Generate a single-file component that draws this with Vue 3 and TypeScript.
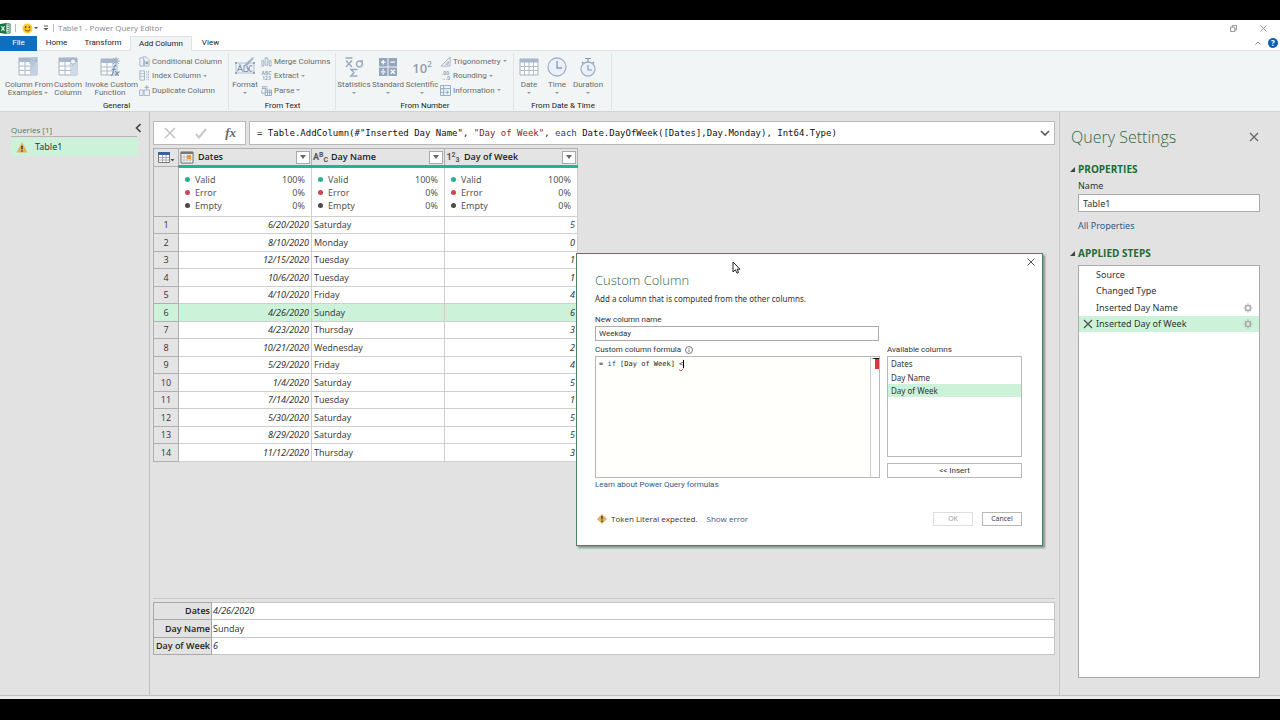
<script setup lang="ts">
import { ref } from 'vue'

interface Row { date: string; day: string; num: number }

const rows: Row[] = [
  { date: '6/20/2020', day: 'Saturday', num: 5 },
  { date: '8/10/2020', day: 'Monday', num: 0 },
  { date: '12/15/2020', day: 'Tuesday', num: 1 },
  { date: '10/6/2020', day: 'Tuesday', num: 1 },
  { date: '4/10/2020', day: 'Friday', num: 4 },
  { date: '4/26/2020', day: 'Sunday', num: 6 },
  { date: '4/23/2020', day: 'Thursday', num: 3 },
  { date: '10/21/2020', day: 'Wednesday', num: 2 },
  { date: '5/29/2020', day: 'Friday', num: 4 },
  { date: '1/4/2020', day: 'Saturday', num: 5 },
  { date: '7/14/2020', day: 'Tuesday', num: 1 },
  { date: '5/30/2020', day: 'Saturday', num: 5 },
  { date: '8/29/2020', day: 'Saturday', num: 5 },
  { date: '11/12/2020', day: 'Thursday', num: 3 },
]
const columns = [
  { name: 'Dates', kind: 'date' },
  { name: 'Day Name', kind: 'text' },
  { name: 'Day of Week', kind: 'number' },
]
const quality = [
  { label: 'Valid', value: '100%', tone: 'valid' },
  { label: 'Error', value: '0%', tone: 'error' },
  { label: 'Empty', value: '0%', tone: 'empty' },
]
const steps = [
  { name: 'Source', gear: false },
  { name: 'Changed Type', gear: false },
  { name: 'Inserted Day Name', gear: true },
  { name: 'Inserted Day of Week', gear: true },
]
const tabs = ['Home', 'Transform', 'Add Column', 'View']

const activeTab = ref('Add Column')
const selectedRow = ref(5)
const selectedStep = ref(3)
const selectedColumn = ref('Day of Week')
const queryName = ref('Table1')
const newColumn = ref('Weekday')
</script>

<template>
  <div class="screen">
    <header class="titlebar">
      <svg class="excel" viewBox="0 0 12 12"><path d="M6 1h5v10H6z" fill="#fff" stroke="#217346" /><path d="M8 3h2M8 5h2M8 7h2M8 9h2" stroke="#217346" /><path d="M0 1l7-1v12l-7-1z" fill="#1e7145" /><path d="M1.500 3.500l3.500 5M5 3.500l-3.500 5" stroke="#fff" stroke-width="1.200" /></svg>
      <span class="bar"></span>
      <svg class="smile" viewBox="0 0 12 12"><circle cx="6" cy="6" r="5.500" fill="#fcc92b" /><circle cx="4" cy="4.500" r=".9" fill="#553c00" /><circle cx="8" cy="4.500" r=".9" fill="#553c00" /><path d="M3 7q3 3.500 6 0" fill="none" stroke="#553c00" /></svg>
      <i class="caret dark"></i>
      <svg class="qat" viewBox="0 0 6 6"><path d="M1 1h4" stroke="#555" /><path d="M0.500 3h5L3 5.500z" fill="#555" /></svg>
      <span class="bar"></span>
      <span class="title">Table1 - Power Query Editor</span>
      <span class="fill"></span>
      <button class="win" aria-label="Restore"><svg viewBox="0 0 8 8"><path d="M.5 2.500h5v5h-5zM2.500 2.500v-2h5v5h-2" fill="none" stroke="#888" /></svg></button>
      <button class="win" aria-label="Close"><svg viewBox="0 0 8 8"><path d="M.5.5l7 7M7.500.5l-7 7" stroke="#888" /></svg></button>
    </header>
    <nav class="tabs">
      <button class="file">File</button>
      <button v-for="t in tabs" :key="t" :class="['tab', t.toLowerCase().replace(' ', '-'), { active: t === activeTab }]" @click="activeTab = t">{{ t }}</button>
      <span class="fill"></span>
      <svg class="collapse" viewBox="0 0 6 4"><path d="M.5 3.500L3 1l2.500 2.500" fill="none" stroke="#888" /></svg>
      <button class="help" aria-label="Help">?</button>
    </nav>

    <section class="ribbon">
      <div class="group general">
        <div class="tools">
          <button class="big w46"><svg viewBox="0 0 20 20"><path d="M1 1h18v17H1z" fill="#f8fafc" stroke="#a9b1bc" /><path d="M1 1h18v4H1z" fill="#a7b7cc" /><path d="M1 9h18M1 13.500h18M7 5v13M13 5v13" stroke="#b3bcc7" /><path d="M13 5h6v13h-6z" fill="#c2d0e2" /><path d="M14 0h6l-4 5h3l-8 9 3-7h-3z" fill="#b6c5d8" /></svg>Column From<br><span>Examples <i class="caret"></i></span></button>
          <button class="big w34"><svg viewBox="0 0 20 20"><path d="M1 1h18v17H1z" fill="#f8fafc" stroke="#a9b1bc" /><path d="M1 1h18v4H1z" fill="#a7b7cc" /><path d="M1 9h18M1 13.500h18M7 5v13M13 5v13" stroke="#b3bcc7" /><path d="M13 5h6v13h-6z" fill="#cfdbe9" /><path d="M15 0v9M10.500 4.500h9M12 1.500l6 6M18 1.500l-6 6" stroke="#9fb0c5" /><circle cx="15" cy="4.500" r="2" fill="#eef2f7" /></svg>Custom<br>Column</button>
          <button class="big w50"><svg viewBox="0 0 20 20"><path d="M1 2h16v16H1z" fill="#f8fafc" stroke="#a9b1bc" /><path d="M1 2h16v4H1z" fill="#a7b7cc" /><path d="M1 10h16M1 14h16M7 6v12" stroke="#b3bcc7" /><path d="M12 6h6v12h-6z" fill="#cfdbe9" /><path d="M16 0v8M12 4h8M13 1l6 6M19 1l-6 6" stroke="#9fb0c5" /><path d="M16.500 9q-2-1-2.500 1.500l-1.200 6q-.5 2-2 2M11.500 12.500h4.500M15 14.500q1.500 0 2 2t2 2M19.500 14.500l-4.500 4" fill="none" stroke="#7f92ab" stroke-width="1.200" /></svg>Invoke Custom<br>Function</button>
          <div class="smalls">
            <button class="small"><svg viewBox="0 0 12 12"><path d="M1 2h4v9H1zM4 1h4l3 3v7H6V4" fill="#edf2f8" stroke="#a3b2c6" /><path d="M7 6h3v3H7z" fill="#91a5bf" /></svg>Conditional Column</button>
            <button class="small"><svg viewBox="0 0 12 12"><path d="M1 1h5v10H1z" fill="#edf2f8" stroke="#a3b2c6" /><path d="M1 4h5M1 7h5M8.500 1v10M10.500 1v10" stroke="#a3b2c6" stroke-dasharray="2 1" /></svg>Index Column <i class="caret"></i></button>
            <button class="small"><svg viewBox="0 0 12 12"><path d="M.5 5.500h4v6h-4zM5.500 5.500h6v6h-6z" fill="#edf2f8" stroke="#a3b2c6" /><path d="M8.500 0v5M6 2.500h5" stroke="#91a5bf" /></svg>Duplicate Column</button>
          </div>
        </div>
        <div class="caption">General</div>
      </div>
      <div class="group text">
        <div class="tools">
          <button class="big w30"><svg viewBox="0 0 20 20"><path d="M1 6h18v10H1z" fill="#eef3f9" stroke="#b4c0d0" /><path d="M0 5h2v2H0zM18 5h2v2h-2zM0 15h2v2H0zM18 15h2v2h-2z" fill="#94a6be" /><path d="M2.500 14.500L5 8l2.500 6.500M3.500 12.500h3M9 14.500V8.500h1.500q2 0 1.500 2.500q2 .5.5 3.500zM17.500 9q-3.500-1.500-3.500 2.500t3.500 2.500" fill="none" stroke="#8699b3" stroke-width="1.200" /><path d="M9 9l2-3 7-6 1 1-6 7z" fill="#a5b2c4" /></svg>Format<br><i class="caret"></i></button>
          <div class="smalls">
            <button class="small"><svg viewBox="0 0 12 12"><path d="M1 5h2v6H1zM9 5h2v6H9z" fill="#edf2f8" stroke="#a3b2c6" /><path d="M4.500 10V2h3v8z" fill="#dfe8f3" stroke="#a3b2c6" /></svg>Merge Columns</button>
            <button class="small"><span class="glyph">ABC<br>123</span>Extract <i class="caret"></i></button>
            <button class="small"><svg viewBox="0 0 12 12"><path d="M1 2h6M1 4h6" stroke="#91a5bf" stroke-width="1.500" stroke-dasharray="2 .5" /><path d="M4.500 5.500h7v6h-7zM4.500 8h7M7 5.500v6M9.500 5.500v6M1 6v3h3" fill="none" stroke="#91a5bf" /></svg>Parse <i class="caret"></i></button>
          </div>
        </div>
        <div class="caption">From Text</div>
      </div>
      <div class="group number">
        <div class="tools">
          <button class="big w34"><svg viewBox="0 0 20 20"><path d="M1.500 1h7M2 3.500l6 6.500M8 3.500L2 10M19 4h-4M15 4a3 3 0 1 0 1 0M13.500 12.500H7l3 3-3 3.500h6.500" fill="none" stroke="#9aa9bd" stroke-width="1.500" /></svg>Statistics<br><i class="caret"></i></button>
          <button class="big w34"><svg viewBox="0 0 20 20"><path d="M1 1h8.500v8.500H1zM10.500 1H19v8.500h-8.500zM1 10.500h8.500V19H1zM10.500 10.500H19V19h-8.500z" fill="#94a6be" /><path d="M5.200 3v4.500M3 5.200h4.500M12.500 5.200H17M3 14.800h4.500M5.200 12v1.500M5.200 16v1.500M12.800 12.800l4 4M16.800 12.800l-4 4" stroke="#fff" stroke-width="1.300" /></svg>Standard<br><i class="caret"></i></button>
          <button class="big w34"><span class="ten">10<sup>2</sup></span>Scientific<br><i class="caret"></i></button>
          <div class="smalls">
            <button class="small"><svg viewBox="0 0 12 12"><path d="M1 11L11 1v10zM6 9l3-3v3z" fill="#edf2f8" stroke="#a3b2c6" /></svg>Trigonometry <i class="caret"></i></button>
            <button class="small"><span class="glyph">.00<br>→.0</span>Rounding <i class="caret"></i></button>
            <button class="small"><svg viewBox="0 0 12 12"><path d="M.5.5h11v11H.5zM4 .5v11M.5 4h11M.5 8h4" fill="#edf2f8" stroke="#91a5bf" /><path d="M8 6v4M6 8h4" stroke="#91a5bf" /></svg>Information <i class="caret"></i></button>
          </div>
        </div>
        <div class="caption">From Number</div>
      </div>
      <div class="group datetime">
        <div class="tools">
          <button class="big w28"><svg viewBox="0 0 20 20"><path d="M1 2h18v16H1z" fill="#fafcfe" stroke="#a9b1bc" /><path d="M1 2h18v3.500H1z" fill="#a7b7cc" /><path d="M1 9.500h18M1 13.500h18M5.500 5v13M10 5v13M14.500 5v13" stroke="#b3bcc7" /></svg>Date<br><i class="caret"></i></button>
          <button class="big w28"><svg viewBox="0 0 20 20"><circle cx="10" cy="10" r="9" fill="#eaf1fa" stroke="#a3b2c6" stroke-width="1.300" /><path d="M10 4v7h5" fill="none" stroke="#8699b3" stroke-width="1.300" /></svg>Time<br><i class="caret"></i></button>
          <button class="big w34"><svg viewBox="0 0 20 20"><circle cx="10" cy="12" r="7" fill="#eaf1fa" stroke="#a3b2c6" stroke-width="1.300" /><path d="M7 1.500h6M10 2v3M4 5l1.500 1.500M16 5l-1.500 1.500M10 8v5h4" fill="none" stroke="#8699b3" stroke-width="1.200" /></svg>Duration<br><i class="caret"></i></button>
        </div>
        <div class="caption">From Date &amp; Time</div>
      </div>
    </section>

    <main class="body">
      <aside class="queries">
        <div class="qhead"><span>Queries [1]</span>
          <button aria-label="Collapse queries"><svg viewBox="0 0 6 10"><path d="M5.500 1L1.500 5l4 4" fill="none" stroke="#444" stroke-width="1.600" /></svg></button>
        </div>
        <button class="query"><svg viewBox="0 0 12 12"><path d="M6 0l6 11.500H0z" fill="#e3b35c" /><path d="M6 4v4M6 9v1.500" stroke="#333" stroke-width="1.500" /></svg>Table1</button>
      </aside>

      <section class="center">
        <div class="fbar">
          <div class="fbtns">
            <button aria-label="Cancel edit"><svg viewBox="0 0 12 12"><path d="M1 1l10 10M11 1L1 11" stroke="#c4c4c4" stroke-width="1.600" /></svg></button>
            <button aria-label="Commit edit"><svg viewBox="0 0 12 12"><path d="M1 7l3 3.500L11 2" fill="none" stroke="#c9c9c9" stroke-width="2" /></svg></button>
            <button class="fx" aria-label="Function">fx</button>
          </div>
          <div class="formula" role="textbox" aria-label="Formula" contenteditable="true" spellcheck="false"><span>= Table.AddColumn(#"Inserted Day Name", <b class="str">"Day of Week"</b>, <b class="kw">each</b> Date.DayOfWeek([Dates],Day.Monday), Int64.Type)</span>
            <svg viewBox="0 0 10 6"><path d="M1 1l4 4 4-4" fill="none" stroke="#555" stroke-width="1.600" /></svg>
          </div>
        </div>

        <table class="grid">
          <thead>
            <tr>
              <th class="idx"><svg viewBox="0 0 17 11"><path d="M.5.5h11v10H.5z" fill="#fff" stroke="#777" /><path d="M0 0h12v3H0z" fill="#35649f" /><path d="M1 5.500h10M1 8h10M4.500 3v7M8 3v7" stroke="#aaa" /><path d="M12.500 7h4l-2 2.500z" fill="#555" /></svg></th>
              <th v-for="c in columns" :key="c.name">
                <div class="colhead">
                  <svg v-if="c.kind === 'date'" viewBox="0 0 14 13"><path d="M1 1h12v11H1z" fill="#fff" stroke="#666" /><path d="M1 1h12v2H1z" fill="#777" /><path d="M1 6h12M1 9h12M4 3v9M7 3v9M10 3v9" stroke="#bbb" /><path d="M7 4h4v4H7z" fill="#e59a3c" /></svg>
                  <span v-else-if="c.kind === 'text'" class="type">A<sup>B</sup><sub>C</sub></span>
                  <span v-else class="type">1<sup>2</sup><sub>3</sub></span>
                  <span class="cname">{{ c.name }}</span>
                  <button :aria-label="'Filter ' + c.name"><svg viewBox="0 0 6 4"><path d="M0 0h6L3 4z" fill="#666" /></svg></button>
                </div>
              </th>
            </tr>
          </thead>
          <tbody>
            <tr class="quality">
              <th></th>
              <td v-for="c in columns" :key="c.name">
                <div v-for="q in quality" :key="q.label" class="q"><i :class="q.tone"></i><span>{{ q.label }}</span><span>{{ q.value }}</span></div>
              </td>
            </tr>
            <tr v-for="(r, i) in rows" :key="i" :class="['row', { sel: i === selectedRow }]" @click="selectedRow = i">
              <th>{{ i + 1 }}</th>
              <td class="num">{{ r.date }}</td>
              <td>{{ r.day }}</td>
              <td class="num">{{ r.num }}</td>
            </tr>
          </tbody>
        </table>

        <div class="preview">
          <table>
            <tbody>
              <tr><th>Dates</th><td class="it">{{ rows[selectedRow].date }}</td></tr>
              <tr><th>Day Name</th><td>{{ rows[selectedRow].day }}</td></tr>
              <tr><th>Day of Week</th><td class="it">{{ rows[selectedRow].num }}</td></tr>
            </tbody>
          </table>
        </div>
      </section>

      <aside class="settings">
        <div class="shead"><h2>Query Settings</h2>
          <button aria-label="Close settings"><svg viewBox="0 0 10 10"><path d="M1 1l8 8M9 1L1 9" stroke="#666" stroke-width="1.300" /></svg></button>
        </div>
        <h3>PROPERTIES</h3>
        <label for="qname">Name</label>
        <input id="qname" v-model="queryName" type="text">
        <a href="#">All Properties</a>
        <h3>APPLIED STEPS</h3>
        <ul class="steps">
          <li v-for="(s, i) in steps" :key="s.name" :class="{ sel: i === selectedStep }" @click="selectedStep = i">
            <svg class="del" viewBox="0 0 10 10"><path v-if="i === selectedStep" d="M1 1l8 8M9 1L1 9" stroke="#555" stroke-width="1.400" /></svg>
            <span>{{ s.name }}</span>
            <svg v-if="s.gear" class="gear" viewBox="0 0 10 10"><circle cx="5" cy="5" r="2.400" fill="none" stroke="#aaa" stroke-width="1.400" /><path d="M5 .5v2M5 7.500v2M.5 5h2M7.500 5h2M1.800 1.800l1.500 1.500M6.700 6.700l1.500 1.500M8.200 1.800L6.700 3.300M3.300 6.700L1.800 8.200" stroke="#aaa" stroke-width="1.200" /></svg>
          </li>
        </ul>
      </aside>
    </main>
    <div class="status"></div>

    <form class="dialog" role="dialog" aria-label="Custom Column" @submit.prevent>
      <button type="button" class="close" aria-label="Close dialog"><svg viewBox="0 0 8 8"><path d="M.5.5l7 7M7.500.5l-7 7" stroke="#555" /></svg></button>
      <h2>Custom Column</h2>
      <p class="desc">Add a column that is computed from the other columns.</p>
      <label class="lbl" for="newcol">New column name</label>
      <input id="newcol" v-model="newColumn" type="text">
      <div class="cols">
        <div class="left">
          <div class="lbl">Custom column formula
            <svg viewBox="0 0 8 8"><circle cx="4" cy="4" r="3.500" fill="none" stroke="#555" stroke-width=".8" /><path d="M4 3.500V6M4 2v.8" stroke="#555" stroke-width=".8" /></svg>
          </div>
          <div class="editor">
            <div class="code" role="textbox" aria-label="Custom column formula" contenteditable="true" spellcheck="false">= <b class="kw">if</b> [Day of Week] <b class="err">&lt;</b></div>
            <div class="ruler"><i></i></div>
          </div>
          <a href="#">Learn about Power Query formulas</a>
        </div>
        <div class="right">
          <div id="avail" class="lbl">Available columns</div>
          <ul role="listbox" aria-labelledby="avail">
            <li v-for="c in columns" :key="c.name" role="option" :aria-selected="c.name === selectedColumn" :class="{ sel: c.name === selectedColumn }" @click="selectedColumn = c.name">{{ c.name }}</li>
          </ul>
          <button type="button" class="insert">&lt;&lt; Insert</button>
        </div>
      </div>
      <div class="foot">
        <svg viewBox="0 0 10 10"><path d="M5 0l5 5-5 5-5-5z" fill="#dfb25f" /><path d="M5 2v3.500M5 6.500V8" stroke="#333" stroke-width="1.300" /></svg>
        <span class="msg">Token Literal expected.</span>
        <a href="#">Show error</a>
        <span class="fill"></span>
        <button type="button" disabled>OK</button>
        <button type="button">Cancel</button>
      </div>
    </form>
    <svg class="pointer" viewBox="0 0 9 13"><path d="M1 1v10l2.400-2.200L5 12.200l1.600-.8L5.100 8.200H8z" fill="#fff" stroke="#222" /></svg>
  </div>
</template>

<style>
body { background: #000; }
</style>

<style scoped>
.screen {
  --ui: "Open Sans", "Noto Sans", sans-serif;
  --wide: "Noto Sans", "Open Sans", sans-serif;
  --narrow: Roboto, "Open Sans", sans-serif;
  --mono: "DejaVu Sans Mono", monospace;
  position: relative; box-sizing: border-box; min-height: 100vh; padding: 20px 0 21px;
  display: flex; flex-direction: column; background: #000; color: #333;
  font: 9px/12px var(--ui); overflow: hidden;
}
.screen * { box-sizing: border-box; }
button { font: inherit; color: inherit; background: none; border: 0; padding: 0; margin: 0; }
input { font: inherit; color: inherit; border: 1px solid #ababab; border-radius: 0; background: #fff; margin: 0; outline: 0; }
h2, h3, p, ul { margin: 0; padding: 0; font-weight: 400; list-style: none; }
a { text-decoration: none; color: #335a86; }
b { font-weight: 400; }
svg { display: block; flex: none; }
.fill { flex: 1; }
.caret { display: inline-block; border: 2px solid transparent; border-top-color: #999; border-bottom: 0; vertical-align: middle; }
.caret.dark { border-top-color: #444; }

.titlebar { height: 16px; background: #fff; display: flex; align-items: center; font: 8px/12px var(--ui); color: #888; }
.excel { width: 11px; height: 11px; }
.bar { width: 1px; height: 8px; background: #bbb; margin: 0 6px 0 4px; }
.smile { width: 11px; height: 11px; }
.titlebar .caret { margin: 0 5px 0 1px; }
.qat { width: 6px; height: 6px; }
.qat + .bar { margin-right: 4px; }
.win { margin-right: 23px; }
.win svg { width: 7px; height: 7px; }
.win:last-child { margin-right: 13px; }

.tabs { height: 15px; background: #fff; display: flex; align-items: center; font: 8px/14px var(--narrow); color: #222; border-bottom: 1px solid #dfe3e3; }
.tabs .file { width: 37px; height: 15px; background: #106ebe; color: #fff; }
.tab { height: 15px; }
.home { width: 39px; }
.transform { width: 54px; }
.add-column { width: 62px; }
.view { width: 37px; }
.tab.active { background: #f1f5f5; border: 1px solid #dfe3e3; border-bottom: 0; }
.collapse { width: 6px; height: 4px; margin-right: 7px; }
.help { width: 10px; height: 10px; border-radius: 5px; background: #0a5fb4; color: #fff; font: bold 8px/10px var(--ui); margin-right: 2px; }

.ribbon { height: 61px; background: #f1f5f5; border-bottom: 1px solid #d0d3d3; display: flex; padding: 2px 0 1px; font: 8px/9px var(--narrow); color: #6b6b6b; }
.group { border-right: 1px solid #e0e4e4; display: flex; flex-direction: column; justify-content: space-between; }
.general { width: 229px; padding-left: 5px; }
.text { width: 107px; padding-left: 1px; }
.number { width: 178px; padding-left: 1px; }
.datetime { width: 98px; padding-left: 1px; }
.tools { display: flex; align-items: flex-start; }
.big { padding-top: 4px; line-height: 8px; white-space: nowrap; display: block; text-align: center; }
.big svg { width: 20px; height: 20px; margin: 0 auto 4px; }
.w28 { width: 28px; }
.w30 { width: 30px; }
.w34 { width: 34px; }
.w46 { width: 46px; }
.w50 { width: 50px; }
.smalls { display: flex; flex-direction: column; justify-content: space-between; height: 43px; padding: 0 0 0 4px; margin-top: 1px; }
.text .smalls, .number .smalls { padding-left: 1px; }
.small { display: flex; align-items: center; height: 14px; gap: 2px; white-space: nowrap; }
.small svg { width: 11px; height: 11px; }
.glyph { width: 11px; font: 5px/5px var(--ui); font-weight: 600; color: #8093ae; text-align: center; }
.ten { display: block; height: 20px; margin-bottom: 4px; font: 600 13px/22px var(--ui); color: #8f9fb5; }
.ten sup { font-size: 8px; line-height: 8px; vertical-align: 6px; }
.caption { text-align: center; color: #222; line-height: 8px; }

.body { flex: 1; display: flex; background: #e2e2e2; }
.queries { width: 150px; border-right: 1px solid #bdbdbd; padding: 11px 11px 0; }
.qhead { display: flex; justify-content: space-between; align-items: flex-end; font-size: 8px; color: #4d7d61; height: 14px; position: relative; }
.qhead span { border-bottom: 1px solid #b5b5b5; width: 126px; }
.qhead button { position: absolute; right: -3px; top: 0; }
.qhead svg { width: 6px; height: 10px; }
.query { display: flex; align-items: center; gap: 7px; width: 100%; height: 18px; background: #ccf3d9; padding-left: 5px; margin-top: 1px; font: 9px/12px var(--wide); }
.query svg { width: 12px; height: 11px; }

.center { flex: 1; min-width: 0; padding: 9px 4px 0 3px; display: flex; flex-direction: column; align-items: flex-start; }
.fbar { display: flex; gap: 3px; width: 100%; height: 24px; }
.fbtns, .formula { background: #fff; border: 1px solid #b8b8b8; display: flex; align-items: center; }
.fbtns { width: 93px; justify-content: space-between; padding: 0 9px 0 10px; }
.fbtns svg { width: 12px; height: 12px; }
.fx { font: italic bold 13px/16px "Liberation Serif", serif; color: #666; }
.formula { flex: 1; min-width: 0; justify-content: space-between; padding: 0 4px 0 7px; font: 9px/12px var(--mono); color: #111; white-space: nowrap; outline: 0; }
.formula svg { width: 10px; height: 6px; }
.str { color: #8c1c2c; }
.kw { color: #3434a8; }

table { border-collapse: collapse; }
.grid { margin-top: 3px; width: 425px; table-layout: fixed; background: #fff; }
.grid th, .grid td { border: 1px solid #cfcfcf; padding: 0; white-space: nowrap; line-height: 12px; }
.grid th { background: #e4e4e4; border-color: #b0b0b0; font-weight: 400; }
.grid thead th { height: 18px; }
.grid thead th:not(.idx) { border-bottom: 0; }
.idx { width: 25px; }
.idx svg { width: 17px; height: 11px; margin: 0 auto; }
.colhead { display: flex; align-items: center; height: 16px; padding: 0 1px; }
.colhead svg { width: 14px; height: 13px; }
.cname { flex: 1; text-align: left; font-weight: 600; padding-left: 4px; color: #222; }
.type { width: 14px; font: bold 9px/12px var(--narrow); color: #555; white-space: nowrap; }
.type sup { font-size: 7px; line-height: 7px; vertical-align: 3px; }
.type sub { font-size: 7px; line-height: 7px; vertical-align: -2px; }
.colhead button { width: 14px; height: 13px; border: 1px solid #aaa; background: #fff; display: grid; place-items: center; }
.colhead button svg { width: 6px; height: 4px; }
.quality td { height: 50px; border-top: 3px solid #1fb593; padding: 5px 6px 0 6px; vertical-align: top; color: #555; }
.q { display: flex; align-items: center; height: 13px; font-family: var(--wide); }
.q i { width: 5px; height: 5px; border-radius: 3px; margin-right: 5px; }
.q span:last-child { margin-left: auto; }
.valid { background: #1fb593; }
.error { background: #cc4456; }
.empty { background: #4a4a4a; }
.row { height: 17px; }
.row:nth-child(odd) { height: 18px; }
.row td { padding: 0 2px; }
.row .num { text-align: right; font-style: italic; }
.row.sel td, .row.sel th { background: #ccf3d9; }

.preview { margin-top: auto; width: 100%; border-top: 1px solid #cacaca; padding: 3px 0 40px; }
.preview table { width: 100%; background: #fff; }
.preview tr { height: 17px; }
.preview tr:nth-child(2) { height: 18px; }
.preview th, .preview td { border: 1px solid #c4c4c4; padding: 0 1px; line-height: 12px; white-space: nowrap; }
.preview th { width: 58px; background: #e2e2e2; border-color: #a8a8a8; text-align: right; font-weight: 600; color: #222; }
.preview td { text-align: left; }
.row .num, .it { font-family: var(--wide); }
.it { font-style: italic; }

.settings { width: 221px; border-left: 1px solid #c6c6c6; padding: 14px 20px 17px 18px; display: flex; flex-direction: column; font-family: var(--wide); }
.shead { display: flex; justify-content: space-between; align-items: center; margin-left: -7px; height: 22px; }
.shead h2 { font: 300 16px/22px var(--ui); color: #2b6a45; }
.shead button { margin-right: 1px; }
.shead svg { width: 10px; height: 10px; }
.settings h3 { font: bold 10px/12px var(--ui); color: #1c6b33; margin-top: 15px; position: relative; }
.settings h3::before { content: ""; position: absolute; left: -8px; top: 4px; border-left: 5px solid transparent; border-bottom: 5px solid #444; }
.settings label { margin-top: 5px; }
.settings input { height: 18px; margin-top: 2px; padding: 0 4px; width: 100%; }
.settings a { margin-top: 8px; }
.steps { flex: 1; margin-top: 6px; background: #fff; border: 1px solid #ababab; }
.steps li { display: flex; align-items: center; height: 17px; padding: 0 6px 0 4px; }
.steps li:nth-child(even) { height: 16px; }
.steps li.sel { background: #ccf3d9; }
.steps span { flex: 1; padding-left: 3px; }
.steps svg { width: 10px; height: 10px; }
.status { height: 4px; background: #ececec; border-top: 1px solid #c0c0c0; }

.dialog { position: absolute; left: 576px; top: 253px; width: 467px; background: #fff; border: 1px solid #4f7f66; box-shadow: 2px 2px 2px #7f9488; padding: 18px 20px 19px 18px; display: flex; flex-direction: column; font: 8px/12px var(--narrow); }
.close { position: absolute; right: 7px; top: 4px; }
.close svg { width: 8px; height: 8px; }
.dialog h2 { font: 300 13px/17px var(--ui); color: #2b6a45; }
.desc { font: 8px/12px var(--wide); margin-top: 4px; }
.lbl { display: flex; align-items: center; gap: 4px; height: 12px; white-space: nowrap; }
label.lbl { margin-top: 9px; }
.lbl svg { width: 8px; height: 8px; }
.dialog input { width: 284px; height: 15px; padding: 0 3px; }
.cols { display: flex; gap: 7px; margin-top: 3px; }
.left { width: 285px; }
.editor { display: flex; height: 122px; border: 1px solid #b8b8b8; background: #fffffb; }
.code { flex: 1; padding: 0 3px; font: 7px/14px var(--mono); color: #222; outline: 0; white-space: pre; }
.err { text-decoration: underline wavy #d33 1px; border-right: 1px solid #000; }
.ruler { width: 9px; border-left: 1px solid #ccc; background: #fff; padding-top: 1px; }
.ruler i { display: block; height: 11px; border-top: 1px solid #000; border-left: 4px solid #fff; background: #dc3545; }
.left a { display: block; margin-top: 1px; }
.right { flex: 1; }
.right ul { height: 101px; border: 1px solid #b8b8b8; font-family: var(--wide); }
.right li { height: 13px; line-height: 13px; padding: 0 3px; }
.right li:first-child { height: 14px; line-height: 14px; }
.right li.sel { background: #ccf3d9; }
.insert { width: 100%; height: 15px; margin-top: 6px; border: 1px solid #b8b8b8; }
.foot { display: flex; align-items: center; margin-top: 20px; height: 15px; font: 8px/12px var(--ui); }
.foot svg { width: 10px; height: 10px; margin: 0 4px 0 2px; }
.foot a { margin-left: 9px; }
.foot button { width: 40px; height: 14px; border: 1px solid #b8b8b8; font: 7px/10px var(--ui); }
.foot button:disabled { border-color: #ddd; color: #999; margin-right: 9px; }
.pointer { position: absolute; left: 732px; top: 261px; width: 9px; height: 13px; }
</style>
